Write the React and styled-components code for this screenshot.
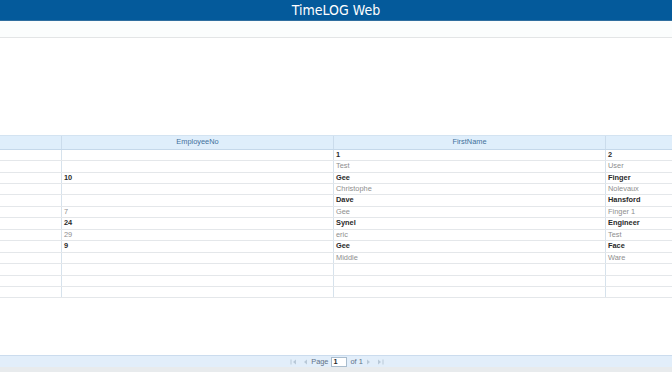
import React from 'react';
import styled, { createGlobalStyle } from 'styled-components';

const GlobalStyle = createGlobalStyle`
    html, body {
        margin: 0;
        padding: 0;
        background: #ffffff;
        font-family: "Liberation Sans", Arial, sans-serif;
    }
`;

const Page = styled.div`
    width: 672px;
    height: 372px;
    overflow: hidden;
    display: flex;
    flex-direction: column;
    background: #ffffff;
`;

const TitleBar = styled.header`
    height: 20px;
    flex: none;
    background: #045a9b;
    border-bottom: 1px solid #2f6e9f;
    display: flex;
    align-items: center;
    justify-content: center;

    h1 {
        margin: 0;
        color: #ffffff;
        font-family: "Liberation Sans Narrow", "DejaVu Sans Condensed", Roboto, sans-serif;
        font-size: 14px;
        font-weight: 400;
        line-height: 20px;
    }
`;

const SubBar = styled.div`
    height: 16px;
    flex: none;
    background: #fbfdfd;
    border-bottom: 1px solid #e3e5e6;
`;

const Spacer = styled.div`
    height: ${({ h }) => h}px;
    flex: none;
`;

const Grid = styled.div`
    flex: none;
    display: flex;
    flex-direction: column;
    overflow: hidden;
`;

const Row = styled.div`
    display: grid;
    grid-template-columns: 62px 272px 272px 272px;
    height: ${({ head }) => (head ? '12.7px' : '10.45px')};
    border-top: ${({ head }) => (head ? '1px solid #d3e3f1' : 'none')};
    border-bottom: 1px solid ${({ head }) => (head ? '#c5d8ea' : '#e4e7ea')};
    background: ${({ head }) => (head ? '#dfeefb' : '#ffffff')};
`;

const Cell = styled.div`
    border-right: 1px solid ${({ head }) => (head ? '#cbdcec' : '#d6e2ec')};
    padding: 0 2px;
    font-size: 7.4px;
    line-height: ${({ head }) => (head ? '12.7px' : '10.45px')};
    white-space: nowrap;
    overflow: hidden;
    text-align: ${({ head }) => (head ? 'center' : 'left')};
    color: ${({ head, strong }) => (head ? '#41719b' : strong ? '#2a2a2a' : '#8e8e8e')};
    font-weight: ${({ strong }) => (strong ? 700 : 400)};
`;

const Pager = styled.div`
    flex: none;
    height: 11px;
    background: #e2eefa;
    border-top: 1px solid #cbdcee;
    display: flex;
    align-items: center;
    justify-content: center;
    gap: 2px;
    font-size: 7.4px;
    color: #6b7f93;
    padding-left: 2px;
`;

const PagerButton = styled.span`
    display: inline-flex;
    width: 9px;
    justify-content: center;
    color: #b9c9d8;
`;

const PageInput = styled.span`
    display: inline-block;
    width: 13px;
    height: 8px;
    line-height: 8px;
    background: #ffffff;
    border: 1px solid #a9bccd;
    color: #2a2a2a;
    font-weight: 700;
    padding-left: 1px;
    margin: 0 1px;
`;

const PagerText = styled.span`
    color: #5e7187;
`;

const Footer = styled.div`
    flex: 1;
    background: #e8ebed;
`;

const Arrow = ({ dir, bar }) => (
    <svg width="7" height="6" viewBox="0 0 7 6">
        {dir === 'left' ? (
            <>
                {bar && <rect x="0.5" y="0.5" width="1" height="5" fill="currentColor" />}
                <path d="M6 0.5 L3 3 L6 5.5 Z" fill="currentColor" />
            </>
        ) : (
            <>
                <path d="M1 0.5 L4 3 L1 5.5 Z" fill="currentColor" />
                {bar && <rect x="5.5" y="0.5" width="1" height="5" fill="currentColor" />}
            </>
        )}
    </svg>
);

const rows = [
    ['', '', '1', '2'],
    ['', '', 'Test', 'User'],
    ['', '10', 'Gee', 'Finger'],
    ['', '', 'Christophe', 'Nolevaux'],
    ['', '', 'Dave', 'Hansford'],
    ['', '7', 'Gee', 'Finger 1'],
    ['', '24', 'Synel', 'Engineer'],
    ['', '29', 'eric', 'Test'],
    ['', '9', 'Gee', 'Face'],
    ['', '', 'Middle', 'Ware'],
    ['', '', '', ''],
    ['', '', '', ''],
    ['', '', '', ''],
];

const App = () => (
    <Page>
        <GlobalStyle />
        <TitleBar>
            <h1>TimeLOG Web</h1>
        </TitleBar>
        <SubBar />
        <Spacer h={97} />
        <Grid>
            <Row head>
                <Cell head></Cell>
                <Cell head>EmployeeNo</Cell>
                <Cell head>FirstName</Cell>
                <Cell head></Cell>
            </Row>
            {rows.map((r, i) => (
                <Row key={i}>
                    {r.map((c, j) => (
                        <Cell key={j} strong={i % 2 === 0}>{c}</Cell>
                    ))}
                </Row>
            ))}
        </Grid>
        <Spacer h={57} />
        <Pager>
            <PagerButton><Arrow dir="left" bar /></PagerButton>
            <PagerButton><Arrow dir="left" /></PagerButton>
            <PagerText>Page</PagerText>
            <PageInput>1</PageInput>
            <PagerText>of 1</PagerText>
            <PagerButton><Arrow dir="right" /></PagerButton>
            <PagerButton><Arrow dir="right" bar /></PagerButton>
        </Pager>
        <Footer />
    </Page>
);

export default App;
